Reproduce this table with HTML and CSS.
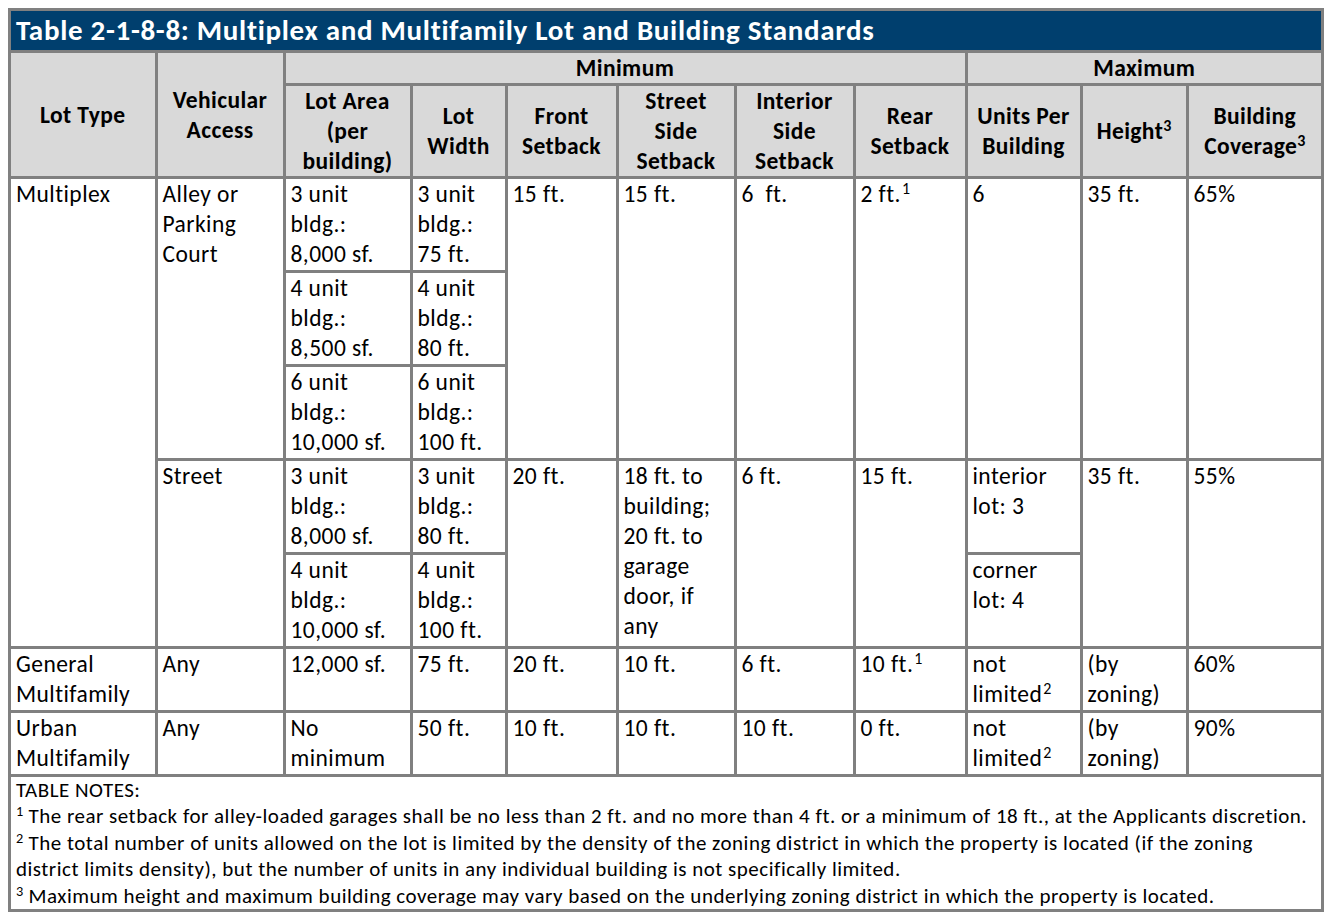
FILE: index.html
```html
<!DOCTYPE html>
<html lang="en">
<head>
<meta charset="utf-8">
<title>Table 2-1-8-8</title>
<link rel="stylesheet" href="styles.css">
</head>
<body>
<table class="std">
  <colgroup>
    <col class="c1"><col class="c2"><col class="c3"><col class="c4"><col class="c5"><col class="c6"><col class="c7"><col class="c8"><col class="c9"><col class="c10"><col class="c11">
  </colgroup>
  <thead>
    <tr class="title-row"><th colspan="11" class="title">Table 2-1-8-8: Multiplex and Multifamily Lot and Building Standards</th></tr>
    <tr class="h1">
      <th rowspan="2">Lot Type</th>
      <th rowspan="2">Vehicular<br>Access</th>
      <th colspan="6">Minimum</th>
      <th colspan="3">Maximum</th>
    </tr>
    <tr class="h2">
      <th>Lot Area<br>(per<br>building)</th>
      <th>Lot<br>Width</th>
      <th>Front<br>Setback</th>
      <th>Street<br>Side<br>Setback</th>
      <th>Interior<br>Side<br>Setback</th>
      <th>Rear<br>Setback</th>
      <th>Units Per<br>Building</th>
      <th>Height<sup>3</sup></th>
      <th>Building<br>Coverage<sup>3</sup></th>
    </tr>
  </thead>
  <tbody>
    <tr class="r3">
      <td rowspan="5">Multiplex</td>
      <td rowspan="3">Alley or<br>Parking<br>Court</td>
      <td>3 unit<br>bldg.:<br>8,000 sf.</td>
      <td>3 unit<br>bldg.:<br>75 ft.</td>
      <td rowspan="3">15 ft.</td>
      <td rowspan="3">15 ft.</td>
      <td rowspan="3">6&nbsp; ft.</td>
      <td rowspan="3">2 ft.<sup>1</sup></td>
      <td rowspan="3">6</td>
      <td rowspan="3">35 ft.</td>
      <td rowspan="3">65%</td>
    </tr>
    <tr class="r3">
      <td>4 unit<br>bldg.:<br>8,500 sf.</td>
      <td>4 unit<br>bldg.:<br>80 ft.</td>
    </tr>
    <tr class="r3">
      <td>6 unit<br>bldg.:<br>10,000 sf.</td>
      <td>6 unit<br>bldg.:<br>100 ft.</td>
    </tr>
    <tr class="r3">
      <td rowspan="2">Street</td>
      <td>3 unit<br>bldg.:<br>8,000 sf.</td>
      <td>3 unit<br>bldg.:<br>80 ft.</td>
      <td rowspan="2">20 ft.</td>
      <td rowspan="2">18 ft. to<br>building;<br>20 ft. to<br>garage<br>door, if<br>any</td>
      <td rowspan="2">6 ft.</td>
      <td rowspan="2">15 ft.</td>
      <td>interior<br>lot: 3</td>
      <td rowspan="2">35 ft.</td>
      <td rowspan="2">55%</td>
    </tr>
    <tr class="r3">
      <td>4 unit<br>bldg.:<br>10,000 sf.</td>
      <td>4 unit<br>bldg.:<br>100 ft.</td>
      <td>corner<br>lot: 4</td>
    </tr>
    <tr class="r2">
      <td>General<br>Multifamily</td>
      <td>Any</td>
      <td>12,000 sf.</td>
      <td>75 ft.</td>
      <td>20 ft.</td>
      <td>10 ft.</td>
      <td>6 ft.</td>
      <td>10 ft.<sup>1</sup></td>
      <td>not<br>limited<sup>2</sup></td>
      <td>(by<br>zoning)</td>
      <td>60%</td>
    </tr>
    <tr class="r2">
      <td>Urban<br>Multifamily</td>
      <td>Any</td>
      <td>No<br>minimum</td>
      <td>50 ft.</td>
      <td>10 ft.</td>
      <td>10 ft.</td>
      <td>10 ft.</td>
      <td>0 ft.</td>
      <td>not<br>limited<sup>2</sup></td>
      <td>(by<br>zoning)</td>
      <td>90%</td>
    </tr>
  </tbody>
  <tfoot>
    <tr>
      <td colspan="11" class="notes">
        <p>TABLE NOTES:</p>
        <p><sup>1</sup> The rear setback for alley-loaded garages shall be no less than 2 ft. and no more than 4 ft. or a minimum of 18 ft., at the Applicants discretion.</p>
        <p><sup>2</sup> The total number of units allowed on the lot is limited by the density of the zoning district in which the property is located (if the zoning<br>district limits density), but the number of units in any individual building is not specifically limited.</p>
        <p><sup>3</sup> Maximum height and maximum building coverage may vary based on the underlying zoning district in which the property is located.</p>
      </td>
    </tr>
  </tfoot>
</table>
</body>
</html>
```

FILE: styles.css
```css
html, body {
  margin: 0;
  padding: 0;
  background: #ffffff;
}

body {
  padding: 8px;
  font-family: Carlito, Calibri, Lato, "Open Sans", sans-serif;
  color: #000000;
}

.std {
  border-collapse: collapse;
  table-layout: fixed;
  width: 1316px;
  font-size: 23.5px;
  line-height: 30px;
  letter-spacing: 0.45px;
}

.c1 { width: 146.5px; }
.c2 { width: 128px; }
.c3 { width: 127px; }
.c4 { width: 95px; }
.c5 { width: 111px; }
.c6 { width: 118px; }
.c7 { width: 119px; }
.c8 { width: 112px; }
.c9 { width: 115px; }
.c10 { width: 106px; }
.c11 { width: 135.5px; }

.std th,
.std td {
  border: 3px solid #808080;
  padding: 0 4px 1px 5px;
  vertical-align: top;
  text-align: left;
  overflow: hidden;
  white-space: nowrap;
}

.std th {
  background: #d9d9d9;
  font-weight: 700;
  text-align: center;
  vertical-align: middle;
  padding: 0 2px;
  letter-spacing: 0.4px;
}

.std th.title {
  background: #003f6e;
  color: #ffffff;
  text-align: left;
  font-size: 29px;
  line-height: 39px;
  letter-spacing: 0.7px;
  padding: 0 5px;
}

.std sup {
  font-size: 0.68em;
  line-height: 0;
  vertical-align: 0.48em;
  font-weight: 400;
  letter-spacing: 0;
  margin-left: 1px;
}

.std th sup {
  font-weight: 700;
  margin-left: 0;
}

.std td.notes {
  font-size: 21px;
  line-height: 26.4px;
  letter-spacing: 0.5px;
  padding: 0 5px;
}

.notes p {
  margin: 0;
}

.notes sup {
  margin-left: 0;
}
```
